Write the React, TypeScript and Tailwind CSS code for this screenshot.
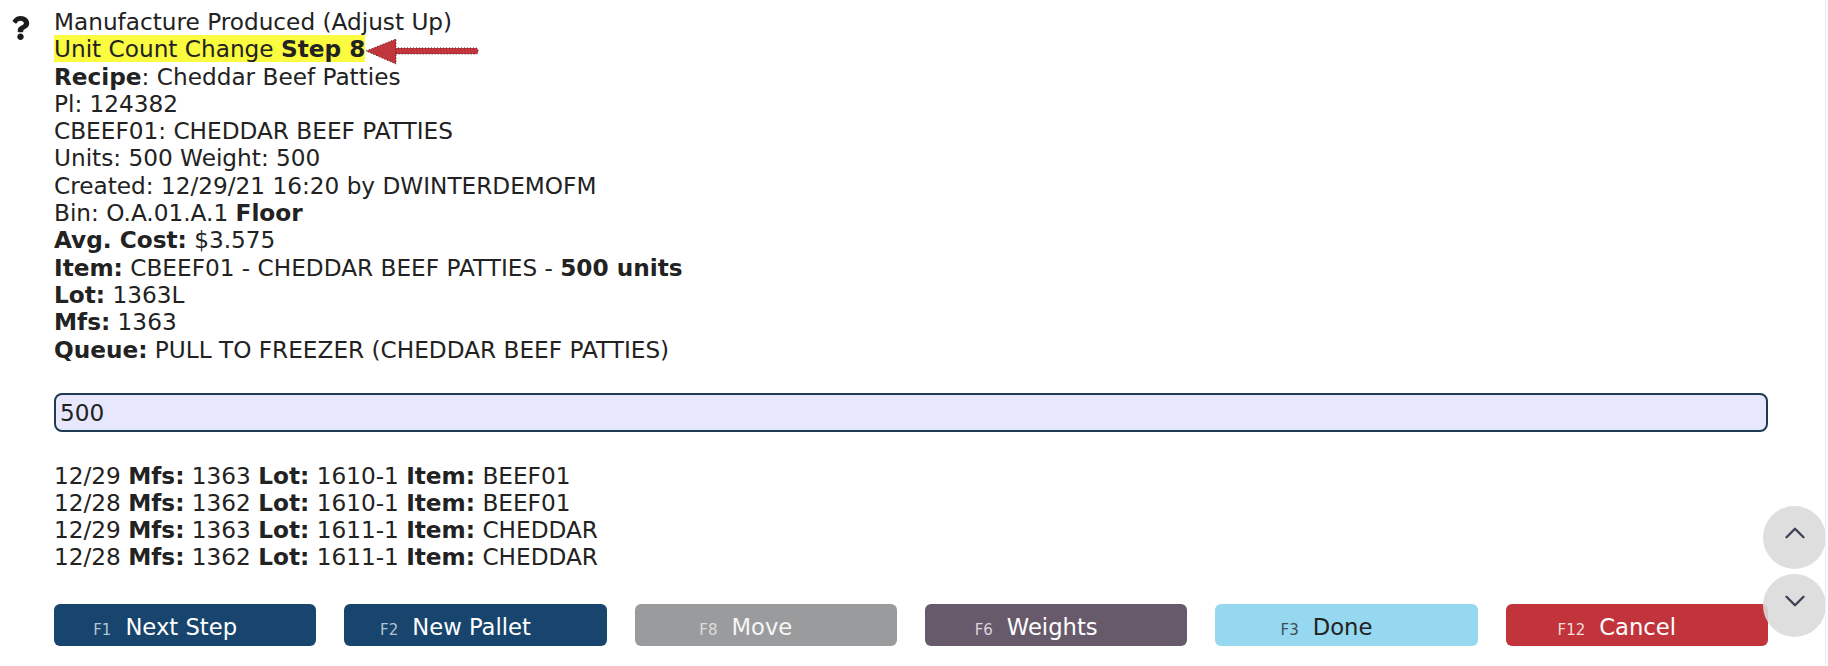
import React from "react";
import { FaQuestion } from "react-icons/fa";
import { ChevronUp, ChevronDown } from "lucide-react";

const B = ({ children }: { children: React.ReactNode }) => (
  <span className="font-bold">{children}</span>
);

type Btn = { k: string; label: string; bg: string; kc: string; lc: string };

const buttons: Btn[] = [
  { k: "F1", label: "Next Step", bg: "bg-[#17456d]", kc: "text-[#b3c3d3]", lc: "text-white" },
  { k: "F2", label: "New Pallet", bg: "bg-[#17456d]", kc: "text-[#b3c3d3]", lc: "text-white" },
  { k: "F8", label: "Move", bg: "bg-[#9a9b9d]", kc: "text-[#dcdcdc]", lc: "text-[#f6f6f6]" },
  { k: "F6", label: "Weights", bg: "bg-[#675a6b]", kc: "text-[#dcd4de]", lc: "text-white" },
  { k: "F3", label: "Done", bg: "bg-[#96d8ef]", kc: "text-[#3d4c55]", lc: "text-[#222]" },
  { k: "F12", label: "Cancel", bg: "bg-[#c1343b]", kc: "text-[#f3dcdc]", lc: "text-white" },
];

export default function App() {
  return (
    <div className="relative w-[1828px] h-[666px] overflow-hidden bg-white text-[#222] font-['DejaVu_Sans',sans-serif] text-[23.2px] leading-[27.3px]">
      <div className="flex pt-[8px]">
        <div className="w-[54px] shrink-0 pl-[11px] pt-[8px]">
          <FaQuestion className="w-[19px] h-[24px] text-[#1c1c1c]" />
        </div>
        <div className="w-[1714px]">
          <div>
            <div>Manufacture Produced (Adjust Up)</div>
            <div>
              <span className="bg-[#fbfb3f]">
                Unit Count Change <B>Step 8</B>
              </span>
            </div>
            <div>
              <B>Recipe</B>: Cheddar Beef Patties
            </div>
            <div>Pl: 124382</div>
            <div>CBEEF01: CHEDDAR BEEF PATTIES</div>
            <div>Units: 500 Weight: 500</div>
            <div>Created: 12/29/21 16:20 by DWINTERDEMOFM</div>
            <div>
              Bin: O.A.01.A.1 <B>Floor</B>
            </div>
            <div>
              <B>Avg. Cost:</B> $3.575
            </div>
            <div>
              <B>Item:</B> CBEEF01 - CHEDDAR BEEF PATTIES - <B>500 units</B>
            </div>
            <div>
              <B>Lot:</B> 1363L
            </div>
            <div>
              <B>Mfs:</B> 1363
            </div>
            <div>
              <B>Queue:</B> PULL TO FREEZER (CHEDDAR BEEF PATTIES)
            </div>
          </div>

          <input
            readOnly
            defaultValue="500"
            className="mt-[30px] block w-full h-[39px] rounded-[8px] border-2 border-[#1f3a52] bg-[#e7e8fd] px-[4px] text-[#222] outline-none"
          />

          <div className="mt-[30px] leading-[27px]">
            <div>
              12/29 <B>Mfs:</B> 1363 <B>Lot:</B> 1610-1 <B>Item:</B> BEEF01
            </div>
            <div>
              12/28 <B>Mfs:</B> 1362 <B>Lot:</B> 1610-1 <B>Item:</B> BEEF01
            </div>
            <div>
              12/29 <B>Mfs:</B> 1363 <B>Lot:</B> 1611-1 <B>Item:</B> CHEDDAR
            </div>
            <div>
              12/28 <B>Mfs:</B> 1362 <B>Lot:</B> 1611-1 <B>Item:</B> CHEDDAR
            </div>
          </div>

          <div className="mt-[34px] flex gap-[28px]">
            {buttons.map((b) => (
              <div
                key={b.k}
                className={`flex-1 h-[42px] rounded-[6px] flex items-center justify-center pr-[40px] pt-[8px] ${b.bg}`}
              >
                <span className="whitespace-nowrap text-[22.7px]">
                  <span className={`text-[15px] mr-[14px] ${b.kc}`}>{b.k}</span>
                  <span className={b.lc}>{b.label}</span>
                </span>
              </div>
            ))}
          </div>
        </div>
      </div>

      {/* annotation arrow */}
      <svg
        className="absolute left-[365px] top-[38px]"
        width="115"
        height="27"
        viewBox="0 0 115 27"
      >
        <rect x="28" y="10" width="85" height="6" rx="2" fill="#c1363c" stroke="#4a1a1e" strokeWidth="1" strokeDasharray="1 2" />
        <polygon points="1,13 31,1 31,26" fill="#c1363c" stroke="#4a1a1e" strokeWidth="1" strokeDasharray="1 2" />
      </svg>

      {/* scroll buttons */}
      <div className="absolute left-[1763px] top-[506px] w-[63px] h-[63px] rounded-full bg-[#dadada]/90 flex items-center justify-center pb-[10px]">
        <ChevronUp size={34} strokeWidth={2.4} absoluteStrokeWidth className="text-[#3d4255]" />
      </div>
      <div className="absolute left-[1763px] top-[574px] w-[63px] h-[63px] rounded-full bg-[#dadada]/90 flex items-center justify-center pb-[10px]">
        <ChevronDown size={34} strokeWidth={2.4} absoluteStrokeWidth className="text-[#3d4255]" />
      </div>

      <div className="absolute left-[1825px] top-0 w-[1px] h-full bg-[#eceef4]" />
    </div>
  );
}
